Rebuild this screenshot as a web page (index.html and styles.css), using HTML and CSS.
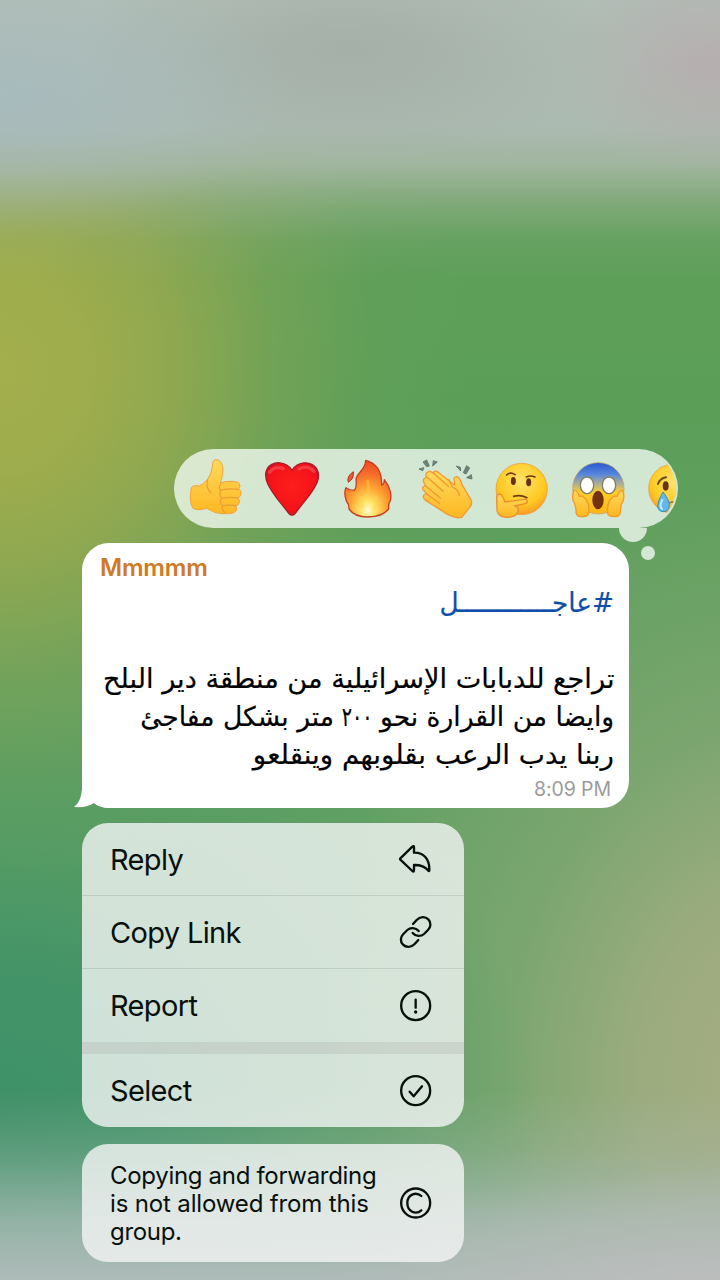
FILE: index.html
```html
<!DOCTYPE html>
<html lang="en">
<head>
<meta charset="utf-8">
<title>Message menu</title>
<link rel="stylesheet" href="styles.css">
</head>
<body>
<main class="screen">
  <section class="reactions">
    <div class="reaction-list">
      <svg class="emoji" viewBox="48 54 180 186">
        <defs>
          <linearGradient id="skin" x1="0" y1="0" x2="0" y2="1"><stop offset="0" stop-color="#ffd95c"/><stop offset="1" stop-color="#fdb822"/></linearGradient>
          <radialGradient id="face" cx=".5" cy=".35" r=".65"><stop offset="0" stop-color="#ffe36a"/><stop offset=".7" stop-color="#fec920"/><stop offset="1" stop-color="#f79a2a"/></radialGradient>
        </defs>
        <path d="M64 143Q70 134 88 138Q102 132 113 117Q126 100 128 70Q130 58 140 59Q154 61 158 80Q161 99 151 130Q160 124 180 124Q203 124 208 131Q213 139 206 147Q216 153 213 163Q211 171 204 174Q212 181 207 190Q204 197 197 198Q203 206 197 214Q190 222 165 221Q139 222 120 210Q109 202 101 207Q85 212 70 206Q59 190 61 164Z" fill="url(#skin)" stroke="#f0a23e" stroke-width="3"/>
        <path d="M152 132Q143 146 153 151Q145 162 155 174Q146 187 158 197Q153 209 166 219M154 150Q180 144 206 148M156 174Q183 170 204 174M158 197Q180 193 198 198M113 120Q106 141 122 158" fill="none" stroke="#ec9c34" stroke-width="3.500" stroke-linecap="round"/>
      </svg>
      <svg class="emoji" viewBox="276 54 180 186">
        <defs><radialGradient id="heart" cx=".5" cy=".45" r=".6"><stop offset="0" stop-color="#fd1f1b"/><stop offset=".75" stop-color="#f51218"/><stop offset="1" stop-color="#cf1028"/></radialGradient></defs>
        <path d="M366 91C349 62 307 61 291 87C277 116 302 150 323 178Q342 201 357 221Q366 230 375 221Q393 197 415 170C438 139 455 112 440 86C423 61 383 63 366 91Z" fill="url(#heart)" stroke="#a91a2b" stroke-width="4"/>
        <path d="M299 97Q314 76 340 86M387 87Q413 74 432 94" fill="none" stroke="#fa777c" stroke-width="10" stroke-linecap="round" opacity=".4"/>
      </svg>
      <svg class="emoji" viewBox="-6 54 180 186">
        <defs><radialGradient id="fire" cx=".5" cy=".88" r=".85"><stop offset="0" stop-color="#fffad0"/><stop offset=".2" stop-color="#ffe264"/><stop offset=".48" stop-color="#fda432"/><stop offset=".75" stop-color="#f66f2a"/><stop offset="1" stop-color="#ec4b25"/></radialGradient></defs>
        <path d="M77 61C108 69 126 91 125 135Q133 133 133 119C149 139 157 165 150 184Q144 193 146 207Q128 230 83 231Q44 231 27 207Q28 193 20 185Q10 160 18 143Q28 151 42 151Q51 145 48 119C49 98 77 91 77 61Z" fill="url(#fire)" stroke="#c93e22" stroke-width="4" stroke-linejoin="round"/>
        <path d="M40 95Q42 105 36 117L25 127Q19 109 40 95Z" fill="#ef5a2c" stroke="#bd2c21" stroke-width="3"/>
        <path d="M83 124Q91 153 76 168Q59 184 67 201M108 171Q114 186 102 207" fill="none" stroke="#ffd24e" stroke-width="9" stroke-linecap="round" opacity=".4"/>
      </svg>
      <svg class="emoji" viewBox="222 54 180 186">
        <path d="M344 125Q338 112 350 110Q360 112 366 134L394 181Q398 195 387 205L365 232Q350 236 329 226Q318 221 296 206L257 181Q247 174 251 166Q254 161 261 162L249 149Q245 139 257 138L251 126Q247 116 260 112Q253 99 266 95Q272 93 279 99Q283 91 293 95L344 136Z" fill="url(#skin)" stroke="#f19a37" stroke-width="4" stroke-linejoin="round"/>
        <path d="M280 99L325 139M262 112L309 154M257 138L301 174M261 163L298 190M327 118Q331 133 339 142Q356 149 358 167" fill="none" stroke="#ed9835" stroke-width="4" stroke-linecap="round"/>
        <path d="M237 87L252 83L248 92ZM249 66L260 60L268 78L260 80ZM280 62L292 66L278 78ZM349 78L361 82L362 93ZM380 77L389 84L378 102L370 98ZM394 104L396 117L380 113Z" fill="#718279" stroke="#687b71" stroke-width="3" stroke-linejoin="round"/>
      </svg>
      <svg class="emoji" viewBox="-30 54 180 186">
        <circle cx="65" cy="147" r="77" fill="url(#face)" stroke="#ed9838" stroke-width="2"/>
        <ellipse cx="40" cy="123" rx="7.500" ry="12" fill="#673119"/><ellipse cx="86" cy="127" rx="7.500" ry="12" fill="#673119"/>
        <path d="M20 105Q31 94 45 104M79 111Q91 105 105 111M41 169Q61 163 81 173" fill="none" stroke="#723b12" stroke-width="5" stroke-linecap="round"/>
        <path d="M-10 171Q-8 161 2 163Q10 171 15 186L71 178Q82 176 82 184Q82 190 72 192L44 198Q57 200 55 211Q52 231 20 232Q-4 232 -9 212Z" fill="url(#skin)" stroke="#ee8e2d" stroke-width="4" stroke-linejoin="round"/>
      </svg>
      <svg class="emoji" viewBox="198 54 180 186">
        <defs><linearGradient id="shock" x1="0" y1="0" x2="0" y2="1"><stop offset="0" stop-color="#2858cf"/><stop offset=".22" stop-color="#5585dc"/><stop offset=".43" stop-color="#b4b38c"/><stop offset=".58" stop-color="#fecf27"/><stop offset="1" stop-color="#fdb41b"/></linearGradient></defs>
        <circle cx="295" cy="145" r="77" fill="url(#shock)" stroke="#c09c5c" stroke-width="2"/>
        <ellipse cx="261" cy="136" rx="20" ry="25" fill="#fff" stroke="#857f65" stroke-width="4"/><ellipse cx="327" cy="136" rx="20" ry="25" fill="#fff" stroke="#857f65" stroke-width="4"/>
        <ellipse cx="294" cy="180" rx="17" ry="28" fill="#74310e"/>
        <path d="M222 151Q234 151 238 169Q252 166 261 184Q270 198 265 224Q259 231 246 230Q231 231 228 218Q229 196 219 181Q216 164 222 151ZM368 151Q356 151 351 169Q337 166 328 184Q320 198 324 224Q330 231 345 230Q358 231 361 218Q360 196 370 181Q374 164 368 151Z" fill="url(#skin)" stroke="#f39a28" stroke-width="4" stroke-linejoin="round"/>
      </svg>
      <svg class="emoji emoji-cut" viewBox="426 54 180 186">
        <circle cx="520" cy="146" r="74" fill="url(#face)" stroke="#ed9838" stroke-width="2"/>
        <path d="M474 132Q480 115 498 112" fill="none" stroke="#684d19" stroke-width="6" stroke-linecap="round"/>
        <ellipse cx="497" cy="138" rx="9" ry="14" fill="#673119"/>
        <path d="M507 189Q520 183 540 188" fill="none" stroke="#a5783d" stroke-width="5"/>
        <path d="M489 156Q509 181 508 200Q503 216 489 215Q473 213 473 198Q474 180 489 156Z" fill="#61b9ea" stroke="#398fbd" stroke-width="3"/>
        <path d="M488 178Q475 202 488 208" fill="none" stroke="#bdeaff" stroke-width="6"/>
      </svg>
    </div>
    <i class="thought thought-large"></i>
    <i class="thought thought-small"></i>
  </section>

  <article class="message">
    <svg class="message-tail" viewBox="0 0 36 28"><path d="M8 0V8Q7 21 0 26Q13 27 20 22Q27 27 36 27V0Z" fill="#fff"/></svg>
    <h1 class="sender">Mmmmm</h1>
    <div class="message-text" lang="ar" dir="rtl">
      <p class="line hashtag"><span class="fit">#عاجــــــــــــل</span></p>
      <p class="line"></p>
      <p class="line line-one"><span class="fit">تراجع للدبابات الإسرائيلية من منطقة دير البلح</span></p>
      <p class="line line-two"><span class="fit">وايضا من القرارة نحو <span class="digits">٢٠٠</span> متر بشكل مفاجئ</span></p>
      <p class="line line-three"><span class="fit">ربنا يدب الرعب بقلوبهم وينقلعو</span></p>
    </div>
    <time class="time">8:09 PM</time>
  </article>

  <nav class="menu">
    <div class="menu-item"><span>Reply</span>
      <svg class="icon" viewBox="51 64 108 108"><path d="M61 116L97 81Q102 77 102 83V99C130 98 149 117 148 151Q148 157 144 152Q130 135 102 136V151Q102 158 97 154L61 120Q59 118 61 116Z"/></svg></div>
    <div class="menu-item"><span>Copy Link</span>
      <svg class="icon" viewBox="51 283 108 108"><path d="M99 313L110 301C120 290 136 290 145 299C154 308 153 322 144 331L132 343C123 351 107 351 98 340"/><path d="M115 361L104 373C94 384 78 384 69 375C60 366 61 352 70 343L82 331C91 323 107 323 116 334"/></svg></div>
    <div class="menu-item"><span>Report</span>
      <svg class="icon" viewBox="51 502 108 108"><circle cx="107" cy="555" r="43.500"/><path d="M107 537V561"/><circle class="dot" cx="107" cy="574" r="5"/></svg></div>
    <div class="menu-item menu-item-separated"><span>Select</span>
      <svg class="icon" viewBox="51 127 108 108"><circle cx="107" cy="180" r="43.500"/><path d="M89 183L101 197L126 167"/></svg></div>
  </nav>

  <aside class="notice">
    <p class="notice-text">Copying and forwarding<br><span class="notice-middle">is not allowed from this</span><br>group.</p>
    <svg class="icon" viewBox="51 466 108 108"><circle cx="107" cy="520" r="43.500"/><path d="M124 499C107 484 82 496 82 520C82 545 107 557 124 542"/></svg>
  </aside>
</main>
</body>
</html>
```
FILE: styles.css
```css
* { box-sizing: border-box; }
body { margin: 0; font-family: Inter, "Liberation Sans", sans-serif; color: #08100b; }
p, h1 { margin: 0; }
svg { display: block; flex: none; }

.screen {
  width: 720px;
  height: 1280px;
  overflow: hidden;
  padding: 449px 42px 0 82px;
  display: flex;
  flex-direction: column;
  align-items: flex-start;
  background:
    radial-gradient(ellipse 300px 130px at 0 95px, rgba(165,187,197,.6), rgba(165,187,197,.3) 50%, rgba(165,187,197,0)),
    radial-gradient(ellipse 150px 110px at 710px 65px, rgba(184,171,174,.8), rgba(184,171,174,.4) 50%, rgba(184,171,174,0)),
    radial-gradient(ellipse 270px 110px at 350px 50px, rgba(163,174,166,.9), rgba(163,174,166,.4) 55%, rgba(163,174,166,0)),
    linear-gradient(#b1beb6 0, #abbab0 130px, rgba(169,184,167,.88) 165px, rgba(165,180,155,.45) 205px, rgba(163,179,150,.12) 240px, rgba(163,179,150,0) 280px),
    radial-gradient(ellipse 420px 120px at 720px 1290px, rgba(190,190,190,.9), rgba(189,189,187,.45) 50%, rgba(190,188,186,0)),
    linear-gradient(rgba(174,187,183,0) 1090px, rgba(174,187,183,.25) 1150px, rgba(170,187,183,.8) 1225px, #aebbb9 1280px),
    radial-gradient(ellipse 470px 520px at 0 370px, #a3ae4c 0, rgba(160,173,76,.96) 20%, rgba(154,170,78,.8) 38%, rgba(135,166,84,.45) 60%, rgba(110,160,88,.15) 82%, rgba(95,160,90,0)),
    radial-gradient(ellipse 540px 440px at 0 1110px, #3e9067 0, rgba(63,146,104,.9) 30%, rgba(70,150,100,.5) 60%, rgba(80,155,97,0)),
    radial-gradient(ellipse 460px 620px at 780px 1080px, #a7ad83 0, rgba(163,173,130,.88) 30%, rgba(145,170,120,.5) 60%, rgba(120,165,110,0)),
    linear-gradient(#62a15d, #5b9e58 400px, #61a062 700px, #68a36b);
}

.reactions { position: relative; width: 504px; height: 79px; align-self: flex-end; }
.reaction-list {
  height: 79px;
  padding: 9px 0 0 12px;
  display: flex;
  gap: 16px;
  overflow: hidden;
  border-radius: 40px;
  background: rgba(240,249,240,.8);
}
.emoji { width: 60px; height: 62px; }
.emoji-cut { clip-path: circle(38px at -4px 30px); }
.thought { position: absolute; background: rgba(240,249,240,.8); }
.thought-large { left: 445px; top: 79px; width: 28px; height: 14px; border-radius: 0 0 14px 14px; }
.thought-small { left: 467px; top: 97px; width: 14px; height: 14px; border-radius: 50%; }

.message {
  position: relative;
  width: 547px;
  height: 265px;
  margin-top: 15px;
  padding: 10px 15px 0 18px;
  border-radius: 27px;
  background: #fff;
}
.message-tail { position: absolute; left: -8px; bottom: -1px; width: 36px; height: 28px; }
.sender { height: 31px; font-size: 24px; line-height: 30px; font-weight: 600; letter-spacing: -.2px; color: #cf7a27; }
.message-text { font-family: "DejaVu Sans", sans-serif; font-size: 27px; color: #000; -webkit-text-stroke: .2px currentColor; }
.line { height: 38px; line-height: 38px; }
.fit { display: inline-block; white-space: nowrap; transform-origin: right center; }
.digits { display: inline-block; margin: 0 -7px; transform: scaleX(.72); }
.hashtag { color: #104eaa; }
.hashtag .fit { transform: scaleX(.975); }
.line-one .fit { transform: scaleX(1.006); }
.line-two .fit { transform: scaleX(.983); }
.line-three .fit { transform: scaleX(1.026); }
.time { display: block; margin: 3px 3px 0 0; text-align: right; font-size: 19.5px; line-height: 24px; color: #9b9b9b; letter-spacing: -.1px; }

.menu, .notice { width: 382px; overflow: hidden; border-radius: 26px; background: rgba(244,245,245,.8); }
.menu { margin-top: 15px; height: 304px; }
.menu-item {
  height: 73px;
  padding: 0 31px 0 28px;
  display: flex;
  align-items: center;
  justify-content: space-between;
  border-bottom: 1px solid rgba(100,120,110,.2);
  font-size: 29px;
  letter-spacing: -.65px;
}
.menu-item:nth-child(3) { border-bottom: 0; }
.menu-item-separated { height: 85px; border-top: 12px solid rgba(150,150,150,.2); border-bottom: 0; background-clip: padding-box; }
.icon { width: 36px; height: 36px; fill: none; stroke: #07100b; stroke-width: 7; stroke-linecap: round; stroke-linejoin: round; }
.dot { fill: #07100b; stroke: none; }

.notice { height: 118px; margin-top: 17px; padding: 0 31px 0 28px; display: flex; align-items: center; justify-content: space-between; }
.notice-text { padding-top: 2px; font-size: 24px; line-height: 28px; letter-spacing: -.31px; white-space: nowrap; }
.notice-middle { letter-spacing: -.15px; }
```
